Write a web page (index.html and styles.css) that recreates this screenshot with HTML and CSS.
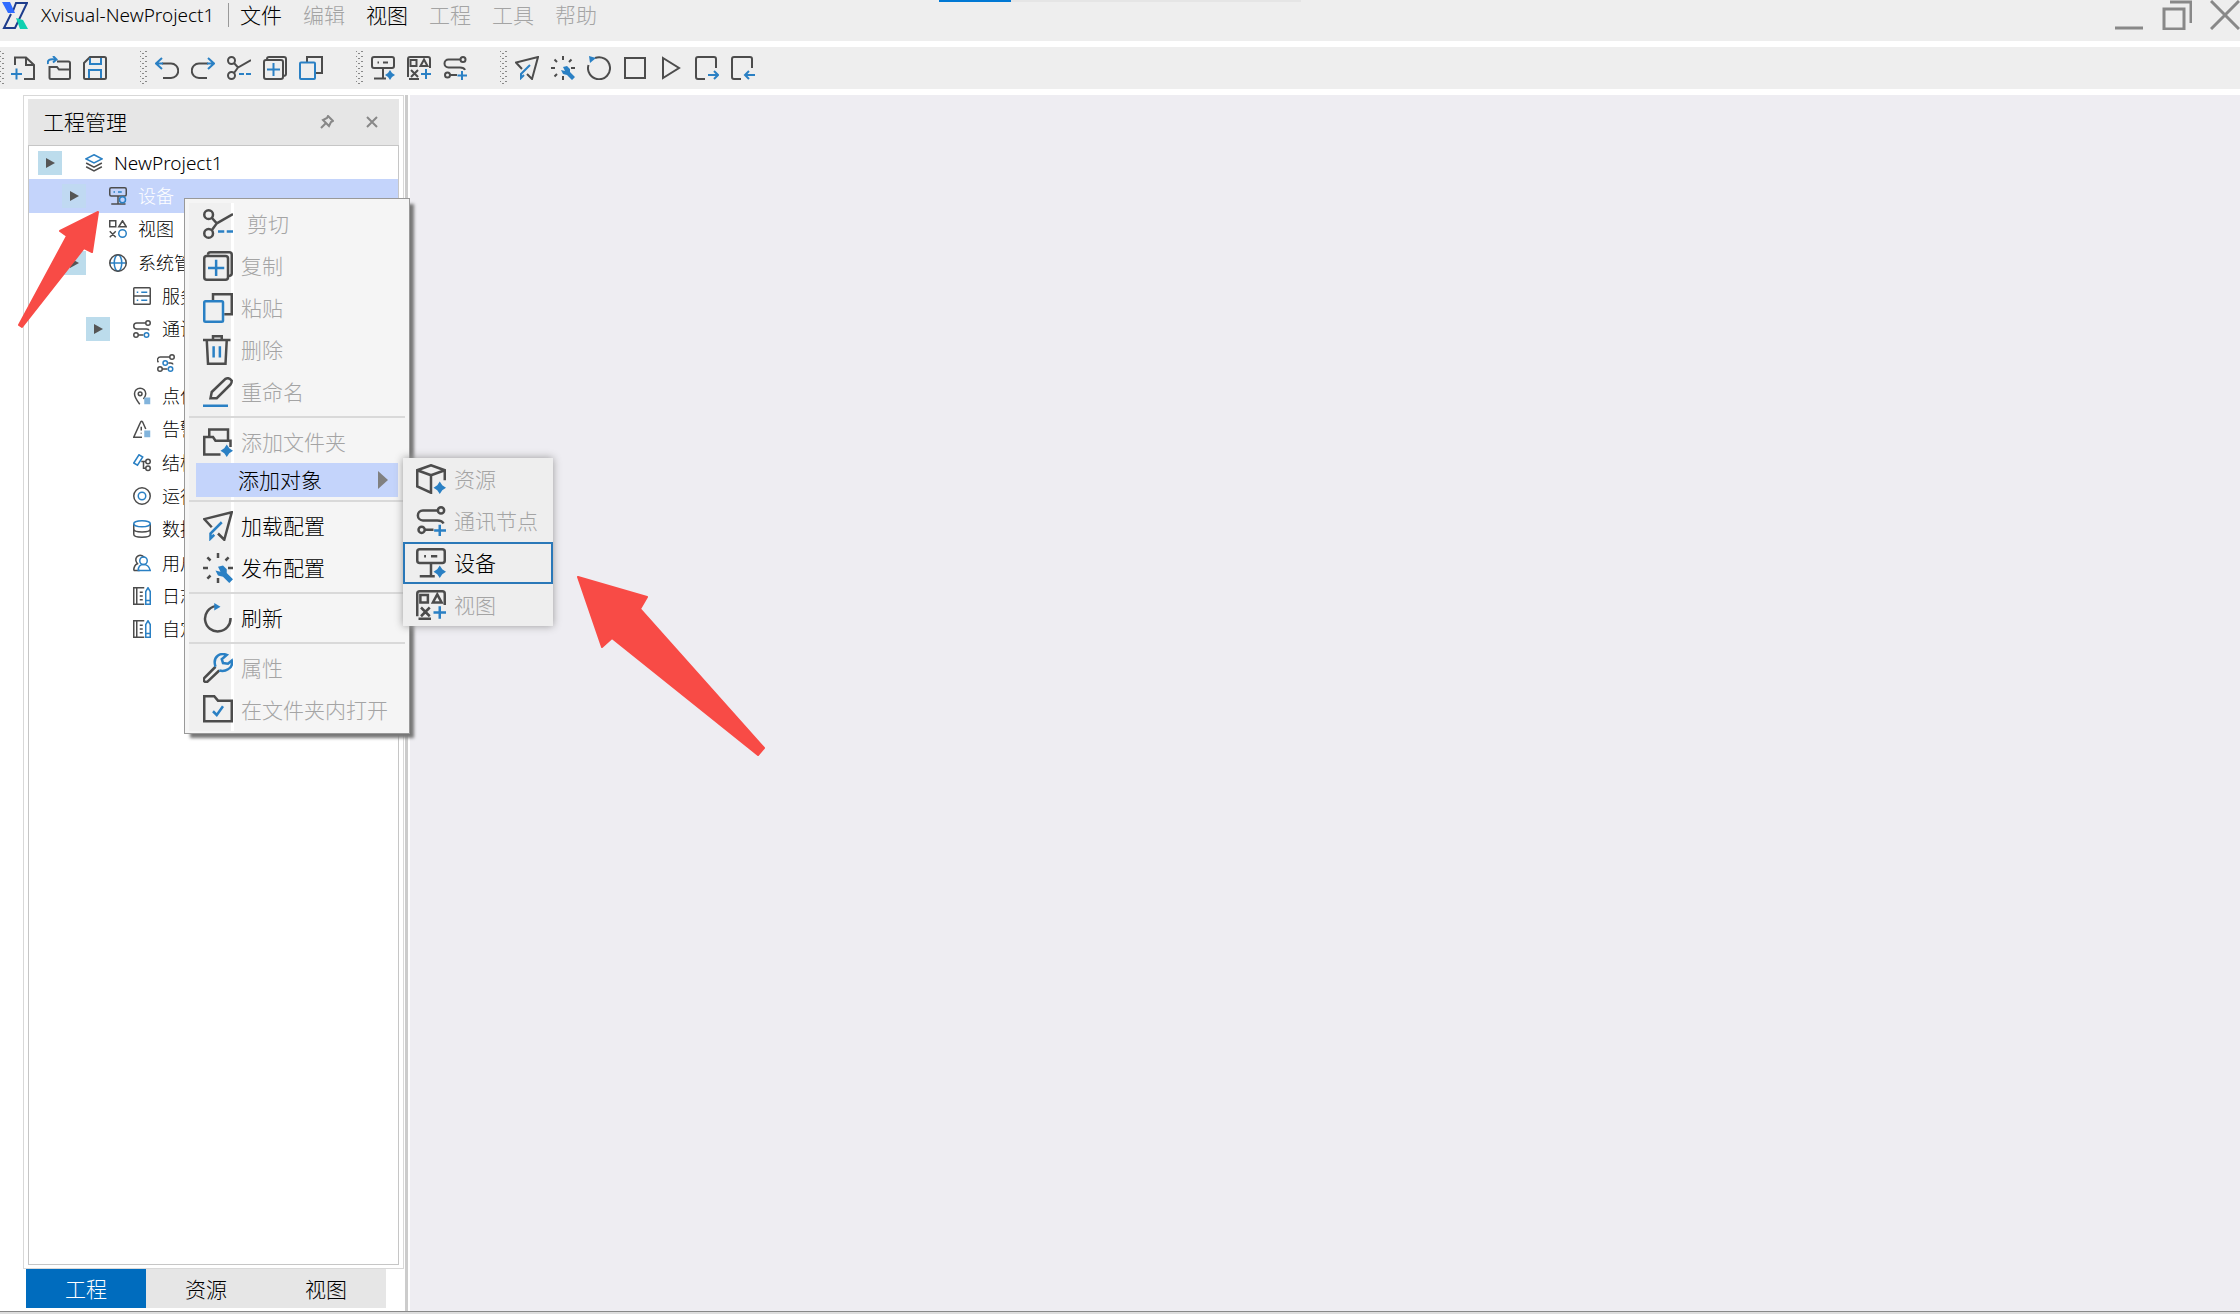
FILE: index.html
```html
<!DOCTYPE html>
<html lang="zh-CN">
<head>
<meta charset="utf-8">
<title>Xvisual-NewProject1</title>
<link rel="stylesheet" href="styles.css">
</head>
<body>
<svg class="sprite" aria-hidden="true">
  <symbol id="i-new" viewBox="0 0 24 24"><path d="M4 9V1.500H15L23 9V23H13M15 1.500V9H23"/><path class="b" d="M5.500 12.500V23.500M0 18H11"/></symbol>
  <symbol id="i-open" viewBox="0 0 24 24"><path d="M2.500 10V21.500a1.500 1.500 0 0 0 1.500 1.500H21.500a1.500 1.500 0 0 0 1.500-1.500V13.500H12L10 11H2.500M10 5.500H21.500a1.500 1.500 0 0 1 1.500 1.500V13"/><path class="b" d="M1 8C0 4 3 2.500 8 3.500M6 0L9.500 3.500L6 6.500"/></symbol>
  <symbol id="i-save" viewBox="0 0 24 24"><path d="M1 7L7 1H21.500a1.500 1.500 0 0 1 1.500 1.500V21.500a1.500 1.500 0 0 1-1.500 1.500H2.500A1.500 1.500 0 0 1 1 21.500Z"/><path class="b" d="M7 2V8H18V2M6 22V14H18V22"/></symbol>
  <symbol id="i-undo" viewBox="0 0 24 24"><path d="M7 7.500H16a7 7 0 0 1 0 14.500H8"/><path class="b" d="M8 7.500H1M7 2L1 7.500L7 13"/></symbol>
  <symbol id="i-redo" viewBox="0 0 24 24"><path d="M17 7.500H8a7 7 0 0 0 0 14.500H16"/><path class="b" d="M16 7.500H23M17 2L23 7.500L17 13"/></symbol>
  <symbol id="i-cut" viewBox="0 0 24 24"><circle cx="4.500" cy="4.500" r="3.500"/><circle cx="4.500" cy="19.500" r="3.500"/><path d="M7 7L11 11.500L24 4M7 17L11 11.500"/><path class="b" d="M12 18H17M19 18H24"/></symbol>
  <symbol id="i-copy" viewBox="0 0 24 24"><path d="M4 3Q4 1 6 1H21Q23 1 23 3V18Q23 20 20 20"/><rect x="1" y="4" width="19" height="19" rx="2"/><path class="b" d="M10.500 7V20M4 13.500H17"/></symbol>
  <symbol id="i-paste" viewBox="0 0 24 24"><path d="M8 6V1H23V17H17"/><rect class="b" x="1" y="6.500" width="15" height="16.500" rx="1"/></symbol>
  <symbol id="i-device" viewBox="0 0 24 24"><rect x="1" y="1" width="22" height="11" rx="2"/><path d="M6.500 6.500H8M12 6.500H17M12 12V22M3 22.500H15"/><path class="b f" d="M19 14L21 17L24 19L21 21L19 24L17 21L14 19L17 17Z"/></symbol>
  <symbol id="i-view" viewBox="0 0 24 24"><path d="M1 21V3Q1 1 3 1H21Q23 1 23 3V12M2 23H12"/><path d="M3.500 4H9.500V10H3.500ZM17 3.500L20.500 10H13.500ZM4 14L11 21M11 14L4 21"/><path class="b" d="M19 13V23M14 18H24"/></symbol>
  <symbol id="i-comm" viewBox="0 0 24 24"><circle cx="20" cy="3.500" r="2.500"/><path d="M17 3.500H5.500a4 4 0 0 0 0 8H17Q21 11.500 22 14M7 19H14"/><circle cx="4.500" cy="19" r="2.500"/><path class="b" d="M19 15V24M14.500 19.500H24"/></symbol>
  <symbol id="i-send" viewBox="0 0 24 24"><path d="M7 13L1 6.500L23 1L17 23L12 18"/><path class="b" d="M15 9L6 18V22L9 19"/></symbol>
  <symbol id="i-publish" viewBox="0 0 24 24"><path d="M12 0V4M3.500 3.500L6 6M20.500 3.500L18 6M0 12H4M20 12H24M3.500 20.500L6 18M12 20V24"/><path class="b f" d="M12 11L16 10L19 13L19 16L24 21L21 24L16 19L12 18L10 14L14 15Z"/></symbol>
  <symbol id="i-restart" viewBox="0 0 24 24"><path d="M8 2A11 11 0 1 1 1.500 9"/><path class="b f" d="M2 0L9 2L3 7Z"/></symbol>
  <symbol id="i-stop" viewBox="0 0 24 24"><rect x="2" y="2" width="20" height="20"/></symbol>
  <symbol id="i-play" viewBox="0 0 24 24"><path d="M4 2L20 12L4 22Z"/></symbol>
  <symbol id="i-export" viewBox="0 0 24 24"><path d="M21 12V3Q21 1 19 1H3Q1 1 1 3V21Q1 23 3 23H10"/><path class="b" d="M13 19H23M19 15L23 19L19 23"/></symbol>
  <symbol id="i-import" viewBox="0 0 24 24"><path d="M21 12V3Q21 1 19 1H3Q1 1 1 3V21Q1 23 3 23H10"/><path class="b" d="M24 19H14M18 15L14 19L18 23"/></symbol>
  <symbol id="i-trash" viewBox="0 0 24 24"><path d="M0 4H22M8 4V1H15V4M3 4L4 23H18L19 4"/><path class="b" d="M8.500 9V18M13.500 9V18"/></symbol>
  <symbol id="i-rename" viewBox="0 0 24 24"><path d="M6 17L7 12L18 1.500Q21 0 23 3Q23 5 22 6L11 17Z"/><path class="b" d="M0 23H20"/></symbol>
  <symbol id="i-folder" viewBox="0 0 24 24"><path d="M5 7V2H20V11M14 22H1V8H8L10 11H22V16"/><path class="b f" d="M19 14L21 17L24 19L21 21L19 24L17 21L14 19L17 17Z"/></symbol>
  <symbol id="i-refresh" viewBox="0 0 24 24"><path d="M10 2.500A10.200 10.200 0 1 0 22 12"/><path class="b f" d="M9 0L14 3L9 6Z"/></symbol>
  <symbol id="i-wrench" viewBox="0 0 24 24"><path d="M10 11L1 20Q0 22 1.500 23Q3 24 4.500 22L13 14"/><path class="b" d="M10 11Q8 5 12 2Q15 0 19 1.500L15 5L16 8L20 8.500L23 6Q24 11 20 13Q17 15 13 14"/></symbol>
  <symbol id="i-check" viewBox="0 0 24 24"><path d="M1 21V1H9L12 4.500H23V21Z"/><path class="b" d="M8 13L11 16L16 9"/></symbol>
  <symbol id="i-cube" viewBox="0 0 24 24"><path d="M23 13V5L12 1L1 5V18L12 23V9L1 5M12 9L23 5"/><path class="b f" d="M19 14L21 17L24 19L21 21L19 24L17 21L14 19L17 17Z"/></symbol>
  <symbol id="i-layers" viewBox="0 0 24 24"><path class="b" d="M12 1L22.500 6.500L12 12L1.500 6.500Z"/><path d="M1.500 12L12 17.500L22.500 12M1.500 17L12 22.500L22.500 17"/></symbol>
  <symbol id="t-device" viewBox="0 0 24 24"><rect x="1" y="1" width="22" height="11" rx="2"/><path d="M12 12V22M3 22.500H22"/><path class="b" d="M6 6.500H8M12 6.500H17"/><circle class="b" cx="18" cy="17" r="4"/></symbol>
  <symbol id="t-view" viewBox="0 0 24 24"><path d="M1 1H9V9H1ZM18 1L23 9H13ZM1 15L9 23M9 15L1 23"/><circle class="b" cx="18" cy="18" r="5"/></symbol>
  <symbol id="t-globe" viewBox="0 0 24 24"><g class="b"><ellipse cx="12" cy="12" rx="5" ry="11"/><path d="M1 12H23"/></g><circle cx="12" cy="12" r="11"/></symbol>
  <symbol id="t-server" viewBox="0 0 24 24"><rect x="1" y="1" width="22" height="22" rx="1"/><path d="M1 12H23"/><path class="b" d="M5 7H7M11 7H19M5 17.500H7M11 17.500H19"/></symbol>
  <symbol id="t-comm" viewBox="0 0 24 24"><circle cx="20" cy="4" r="3"/><path d="M17 4H5a4 4 0 0 0 0 8H18Q21 12 21 14M7 20H14"/><circle cx="4" cy="20" r="3"/><circle class="b" cx="18" cy="20" r="3"/></symbol>
  <symbol id="t-node" viewBox="0 0 24 24"><circle cx="20" cy="4" r="3"/><path d="M17 4H5a4 4 0 0 0-3 7M15 12H18Q21 12 21 14M7 20H14"/><circle cx="4" cy="20" r="3"/><g class="b"><circle cx="11" cy="12" r="3"/><circle cx="18" cy="20" r="3"/></g></symbol>
  <symbol id="t-point" viewBox="0 0 24 24"><path d="M9 23Q2 14 2 9A7.500 7.500 0 0 1 17 9Q17 12 14 16"/><circle cx="9.500" cy="9" r="2.500"/><path class="p" d="M15 14H23V23H15Z"/></symbol>
  <symbol id="t-alarm" viewBox="0 0 24 24"><path d="M12 23H1L10 3Q11 0 13 3L17 12M11 9V14M11 17V18"/><path class="p" d="M15 14H23V23H15Z"/></symbol>
  <symbol id="t-struct" viewBox="0 0 24 24"><path class="b" d="M1 12L8 1L13 4L6 15Z"/><path d="M11 10H17M14 10V19H17"/><circle cx="20" cy="10" r="3"/><circle cx="20" cy="19" r="3"/></symbol>
  <symbol id="t-run" viewBox="0 0 24 24"><circle cx="12" cy="12" r="11"/><circle class="b" cx="12" cy="12" r="5"/></symbol>
  <symbol id="t-data" viewBox="0 0 24 24"><path d="M1 5V19Q1 23 12 23T23 19V5M1 12Q1 16 12 16T23 12"/><ellipse class="b" cx="12" cy="5" rx="11" ry="4"/></symbol>
  <symbol id="t-user" viewBox="0 0 24 24"><path d="M1 22H9M1 22Q1 15 6 13Q2 8 5 4Q9-1 15 4"/><g class="b"><circle cx="14" cy="9" r="5"/><path d="M7 22Q7 14 14 14T23 22Z"/></g></symbol>
  <symbol id="t-log" viewBox="0 0 24 24"><path d="M15 1H1V23H15M5 1V23M9 7H13M9 12H13M9 17H13"/><path class="b" d="M17 23V6L20 1L23 6V23ZM17 18H23"/></symbol>
</svg>

<header class="titlebar">
  <svg class="logo" viewBox="0 0 26 28"><path class="logo-line" d="M11 9L14 1H25L13 26H2L9 12"/><path class="logo-blue" d="M0 0H8L13 11H6Z"/><path class="logo-green" d="M14 16L21 18L26 27H18Z"/></svg>
  <h1 class="app-name">Xvisual-NewProject1</h1>
  <nav class="menubar" aria-label="主菜单">
    <button>文件</button><button disabled>编辑</button><button>视图</button><button disabled>工程</button><button disabled>工具</button><button disabled>帮助</button>
  </nav>
  <div class="progress"></div>
  <div class="window-controls">
    <button aria-label="最小化"><svg viewBox="0 0 30 30"><path d="M1 28H29"/></svg></button>
    <button aria-label="还原"><svg viewBox="0 0 30 30"><path d="M2 9H22V29H2ZM8 2H29V23"/></svg></button>
    <button aria-label="关闭"><svg viewBox="0 0 30 30"><path d="M1 1L29 29M29 1L1 29"/></svg></button>
  </div>
</header>

<div class="toolbar" role="toolbar">
  <div class="tools">
    <button aria-label="新建"><svg class="icon"><use href="#i-new"/></svg></button>
    <button aria-label="打开"><svg class="icon"><use href="#i-open"/></svg></button>
    <button aria-label="保存"><svg class="icon"><use href="#i-save"/></svg></button>
  </div>
  <div class="tools">
    <button aria-label="撤销"><svg class="icon"><use href="#i-undo"/></svg></button>
    <button aria-label="重做"><svg class="icon"><use href="#i-redo"/></svg></button>
    <button aria-label="剪切"><svg class="icon"><use href="#i-cut"/></svg></button>
    <button aria-label="复制"><svg class="icon"><use href="#i-copy"/></svg></button>
    <button aria-label="粘贴"><svg class="icon"><use href="#i-paste"/></svg></button>
  </div>
  <div class="tools">
    <button aria-label="添加设备"><svg class="icon"><use href="#i-device"/></svg></button>
    <button aria-label="添加视图"><svg class="icon"><use href="#i-view"/></svg></button>
    <button aria-label="添加通讯节点"><svg class="icon"><use href="#i-comm"/></svg></button>
  </div>
  <div class="tools">
    <button aria-label="加载配置"><svg class="icon"><use href="#i-send"/></svg></button>
    <button aria-label="发布配置"><svg class="icon"><use href="#i-publish"/></svg></button>
    <button aria-label="刷新"><svg class="icon"><use href="#i-restart"/></svg></button>
    <button aria-label="停止"><svg class="icon"><use href="#i-stop"/></svg></button>
    <button aria-label="运行"><svg class="icon"><use href="#i-play"/></svg></button>
    <button aria-label="导出"><svg class="icon"><use href="#i-export"/></svg></button>
    <button aria-label="导入"><svg class="icon"><use href="#i-import"/></svg></button>
  </div>
</div>

<main class="workspace">
  <aside class="sidebar">
    <section class="panel">
      <header class="panel-head">
        <h2>工程管理</h2>
        <button aria-label="固定"><svg viewBox="0 0 14 14"><path d="M8 1L13 6L11 7L9 11L3 5L7 3ZM5.500 8.500L1 13"/></svg></button>
        <button aria-label="关闭面板"><svg viewBox="0 0 14 14"><path d="M2 2L12 12M12 2L2 12"/></svg></button>
      </header>
      <div class="panel-body">
        <ul class="tree">
          <li class="l0"><button class="twist" aria-label="展开"></button><svg class="icon"><use href="#i-layers"/></svg><span>NewProject1</span></li>
          <li class="l1 selected"><button class="twist" aria-label="展开"></button><svg class="icon"><use href="#t-device"/></svg><span>设备</span></li>
          <li class="l1 leaf"><svg class="icon"><use href="#t-view"/></svg><span>视图</span></li>
          <li class="l1"><button class="twist" aria-label="展开"></button><svg class="icon"><use href="#t-globe"/></svg><span>系统管理</span></li>
          <li class="l2 leaf"><svg class="icon"><use href="#t-server"/></svg><span>服务</span></li>
          <li class="l2"><button class="twist" aria-label="展开"></button><svg class="icon"><use href="#t-comm"/></svg><span>通讯</span></li>
          <li class="l3 leaf"><svg class="icon"><use href="#t-node"/></svg></li>
          <li class="l2 leaf"><svg class="icon"><use href="#t-point"/></svg><span>点位</span></li>
          <li class="l2 leaf"><svg class="icon"><use href="#t-alarm"/></svg><span>告警</span></li>
          <li class="l2 leaf"><svg class="icon"><use href="#t-struct"/></svg><span>结构</span></li>
          <li class="l2 leaf"><svg class="icon"><use href="#t-run"/></svg><span>运行</span></li>
          <li class="l2 leaf"><svg class="icon"><use href="#t-data"/></svg><span>数据</span></li>
          <li class="l2 leaf"><svg class="icon"><use href="#t-user"/></svg><span>用户</span></li>
          <li class="l2 leaf"><svg class="icon"><use href="#t-log"/></svg><span>日志</span></li>
          <li class="l2 leaf"><svg class="icon"><use href="#t-log"/></svg><span>自定</span></li>
        </ul>
      </div>
    </section>
    <nav class="tabs" role="tablist">
      <button role="tab" aria-selected="true">工程</button>
      <button role="tab" aria-selected="false">资源</button>
      <button role="tab" aria-selected="false">视图</button>
    </nav>
  </aside>
  <div class="splitter"></div>
  <section class="canvas"></section>
</main>
<footer class="statusbar"></footer>

<div class="menu context" role="menu">
  <button role="menuitem" disabled><svg class="icon"><use href="#i-cut"/></svg><span class="cut-label">剪切</span></button>
  <button role="menuitem" disabled><svg class="icon"><use href="#i-copy"/></svg><span>复制</span></button>
  <button role="menuitem" disabled><svg class="icon"><use href="#i-paste"/></svg><span>粘贴</span></button>
  <button role="menuitem" disabled><svg class="icon"><use href="#i-trash"/></svg><span>删除</span></button>
  <button role="menuitem" disabled><svg class="icon"><use href="#i-rename"/></svg><span>重命名</span></button>
  <hr>
  <button role="menuitem" disabled><svg class="icon"><use href="#i-folder"/></svg><span>添加文件夹</span></button>
  <button role="menuitem" class="open" aria-haspopup="true"><span>添加对象</span></button>
  <hr>
  <button role="menuitem"><svg class="icon"><use href="#i-send"/></svg><span>加载配置</span></button>
  <button role="menuitem"><svg class="icon"><use href="#i-publish"/></svg><span>发布配置</span></button>
  <hr>
  <button role="menuitem"><svg class="icon"><use href="#i-refresh"/></svg><span>刷新</span></button>
  <hr>
  <button role="menuitem" disabled><svg class="icon"><use href="#i-wrench"/></svg><span>属性</span></button>
  <button role="menuitem" disabled><svg class="icon"><use href="#i-check"/></svg><span>在文件夹内打开</span></button>
</div>

<div class="menu submenu" role="menu">
  <button role="menuitem" disabled><svg class="icon"><use href="#i-cube"/></svg><span>资源</span></button>
  <button role="menuitem" disabled><svg class="icon"><use href="#i-comm"/></svg><span>通讯节点</span></button>
  <button role="menuitem" class="current"><svg class="icon"><use href="#i-device"/></svg><span>设备</span></button>
  <button role="menuitem" disabled><svg class="icon"><use href="#i-view"/></svg><span>视图</span></button>
</div>

<svg class="pointer pointer-tree" viewBox="0 0 84 120"><path d="M81 3L75 43L67 39L5 118L2 116L50 27L43 22Z"/></svg>
<svg class="pointer pointer-submenu" viewBox="0 0 194 186"><path d="M3 3L72 23L65 35L189 174L183 181L37 64L27 73Z"/></svg>
</body>
</html>
```
FILE: styles.css
```css
* { box-sizing: border-box; }

body {
  margin: 0;
  min-height: 100vh;
  display: flex;
  flex-direction: column;
  position: relative;
  overflow-x: hidden;
  background: #fff;
  color: #000;
  font-family: "Noto Sans", "Noto Sans CJK SC", sans-serif;
  font-size: 21px;
  font-weight: 300;
  line-height: 30px;
}

button {
  margin: 0;
  padding: 0;
  border: 0;
  background: none;
  color: inherit;
  font: inherit;
}

button:disabled { color: #a4a4a4; }

h1, h2 { margin: 0; font: inherit; }

ul { margin: 0; padding: 0; list-style: none; }

.sprite { position: absolute; width: 0; height: 0; }

.icon {
  flex: none;
  width: 24px;
  height: 24px;
  fill: none;
  stroke: #4c4c4c;
  stroke-width: 2;
}

.b { stroke: #2a80c4; }
.f { fill: #2a80c4; stroke: none; }
.p { fill: #82b4dc; stroke: none; }

/* Title bar */
.titlebar {
  height: 41px;
  display: flex;
  align-items: flex-start;
  position: relative;
  background: #eee;
  padding-left: 2px;
}

.logo { width: 26px; height: 28px; margin: 2px 13px 0 0; }
.logo-line { fill: none; stroke: #1d3c8c; stroke-width: 2; }
.logo-blue { fill: #2f6bff; }
.logo-green { fill: #0fd0b0; }

.app-name { width: 176px; font-size: 19px; white-space: nowrap; }

.menubar {
  display: flex;
  gap: 21px;
  margin: 3px 0 0 11px;
  padding-left: 11px;
  border-left: 1px solid #999;
  line-height: 24px;
}

.progress {
  position: absolute;
  top: 0;
  left: calc(50% - 181px);
  width: 362px;
  height: 2px;
  background: linear-gradient(90deg, #0078d4 72px, #e5e5e5 72px);
}

.window-controls { display: flex; gap: 18px; margin-left: auto; }
.window-controls button { display: flex; }
.window-controls svg { width: 30px; height: 30px; fill: none; stroke: #888; stroke-width: 3; }

/* Toolbar */
.toolbar {
  height: 42px;
  margin: 6px 0;
  display: flex;
  align-items: center;
  gap: 33px;
  background: #eee;
}

.tools { display: flex; gap: 12px; align-items: center; }
.tools button { display: flex; }

.tools::before {
  content: "";
  width: 8px;
  height: 35px;
  margin-right: -5px;
  background:
    radial-gradient(circle, #888 1px, transparent 1px) 0 0 / 6px 5px,
    radial-gradient(circle, #888 1px, transparent 1px) 3px 3px / 6px 5px;
}

.tools:first-child::before { width: 4px; }

/* Workspace */
.workspace { flex: 1; display: flex; }

.sidebar { width: 405px; display: flex; flex-direction: column; padding: 0 1px 3px 23px; }

.panel {
  flex: 1;
  display: flex;
  flex-direction: column;
  border: 1px solid #d8d8d8;
  padding: 3px 4px;
}

.panel-head {
  height: 46px;
  display: flex;
  align-items: center;
  gap: 31px;
  padding: 0 20px 0 15px;
  background: #e6e6e6;
}

.panel-head h2 { margin-right: auto; }
.panel-head button { display: flex; }
.panel-head svg { width: 14px; height: 14px; fill: none; stroke: #888; stroke-width: 2; }

.panel-body { flex: 1; border: 1px solid #c6c6c6; }

.tree {
  height: 500px;
  display: grid;
  grid-template-rows: repeat(15, 1fr);
  font-size: 18px;
}

.tree li { display: flex; align-items: center; }
.tree .icon { width: 18px; height: 18px; margin-right: 11px; }
.l0 { padding-left: 9px; font-size: 19px; }
.l1 { padding-left: 33px; }
.l2 { padding-left: 57px; }
.l3 { padding-left: 81px; }
.leaf::before { content: ""; width: 47px; }
.selected { background: #c4d4fb; color: #fff; }

.twist {
  width: 24px;
  height: 24px;
  margin-right: 23px;
  background: #bcdcec;
  display: flex;
  align-items: center;
  justify-content: center;
}

.twist::before {
  content: "";
  border: solid transparent;
  border-width: 5px 0 5px 9px;
  border-left-color: #555;
}

.selected .twist { background: #c0d9f2; }

.tabs { display: flex; margin: 0 18px 0 3px; background: #e6e6e6; }
.tabs button { width: 120px; height: 39px; }
.tabs [aria-selected="true"] { background: #006cbe; color: #fff; }

.splitter { width: 5px; border: solid #ccc; border-width: 0 0 0 3px; }
.canvas { flex: 1; background: #eeedf2; }
.statusbar { height: 3px; border-top: 1px solid #888; background: #ddd; }

/* Pop-up menus */
.menu { position: absolute; display: flex; flex-direction: column; }

.menu button {
  height: 42px;
  display: flex;
  align-items: center;
  gap: 8px;
  text-align: left;
}

.menu .icon { width: 30px; height: 30px; }

.context {
  left: 184px;
  top: 198px;
  width: 226px;
  padding: 4px 0 2px;
  border: 1px solid #999;
  background:
    linear-gradient(90deg, #f0f0f0 42px, #fff 42px) 4px 4px / 45px 528px no-repeat,
    #f5f5f5;
  box-shadow: 5px 5px 3px -1px #777;
}

.context button { padding-left: 18px; }
.context hr { width: 216px; height: 2px; margin: 3px 4px; border: 0; background: #d9d9d9; }
.cut-label { padding-left: 6px; }

.context .open {
  height: 34px;
  margin: 0 11px;
  padding: 0 10px 0 42px;
  justify-content: space-between;
  background: #c4d4fb;
}

.open::after {
  content: "";
  border: solid transparent;
  border-width: 9px 0 9px 10px;
  border-left-color: #808080;
}

.submenu {
  left: 403px;
  top: 458px;
  width: 150px;
  background: #eee;
  box-shadow: 0 0 8px #999;
}

.submenu button { padding-left: 12px; border: 1px solid transparent; }
.submenu .current { border: 2px solid #2a78b8; padding-left: 11px; }

/* Callout arrows */
.pointer { position: absolute; fill: #f84b46; stroke: #f84b46; stroke-width: 2; stroke-linejoin: round; }
.pointer-tree { left: 17px; top: 209px; width: 84px; height: 120px; }
.pointer-submenu { left: 575px; top: 574px; width: 194px; height: 186px; }
```
